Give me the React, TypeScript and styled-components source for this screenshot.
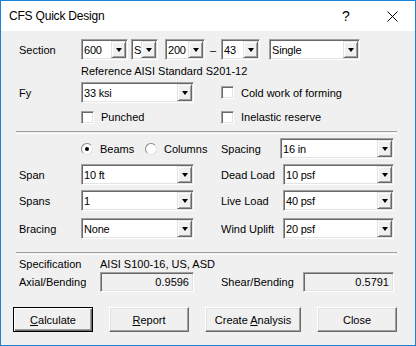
import React from "react";
import styled, { createGlobalStyle } from "styled-components";

const GlobalStyle = createGlobalStyle`
  html, body {
    margin: 0;
    padding: 0;
    background: #ffffff;
  }
  body {
    font-family: "Liberation Sans", Arial, sans-serif;
    font-size: 11px;
    color: #000000;
  }
`;

const Window = styled.div`
  width: 416px;
  height: 346px;
  box-sizing: border-box;
  border: 1px solid #1883d7;
  display: flex;
  flex-direction: column;
  background: #f0f0f0;
  overflow: hidden;
`;

const TitleBar = styled.div`
  height: 30px;
  flex-shrink: 0;
  background: #ffffff;
  display: flex;
  align-items: center;
  padding-left: 8px;
`;

const Title = styled.div`
  flex: 1;
  font-size: 12px;
  color: #000;
  letter-spacing: -0.2px;
`;

const TitleButton = styled.div`
  width: 46px;
  height: 30px;
  display: flex;
  align-items: center;
  justify-content: center;
  font-size: 14px;
`;

const Body = styled.div`
  flex: 1;
  padding: 8px 0 0 18px;
  display: flex;
  flex-direction: column;
`;

const Row = styled.div<{ $h: number; $mt?: number }>`
  display: flex;
  align-items: center;
  height: ${(p) => p.$h}px;
  margin-top: ${(p) => p.$mt ?? 0}px;
`;

const Label = styled.div<{ $w: number }>`
  width: ${(p) => p.$w}px;
  flex-shrink: 0;
  white-space: nowrap;
`;

const Spacer = styled.div<{ $w: number }>`
  width: ${(p) => p.$w}px;
  flex-shrink: 0;
`;

const Combo = styled.div<{ $w: number; $ml?: number }>`
  width: ${(p) => p.$w}px;
  height: 21px;
  margin-left: ${(p) => p.$ml ?? 0}px;
  box-sizing: border-box;
  flex-shrink: 0;
  display: flex;
  align-items: center;
  background: #ffffff;
  border: 1px solid;
  border-color: #a0a0a0 #ffffff #ffffff #a0a0a0;
  box-shadow: inset 1px 1px 0 #696969, inset -1px -1px 0 #e3e3e3;
  padding: 2px 1px 2px 2px;
`;

const ComboText = styled.div`
  flex: 1;
  min-width: 0;
  white-space: nowrap;
  letter-spacing: -0.2px;
`;

const ArrowButton = styled.div`
  width: 15px;
  height: 17px;
  box-sizing: border-box;
  flex-shrink: 0;
  display: flex;
  align-items: center;
  justify-content: center;
  background: #f0f0f0;
  border: 1px solid;
  border-color: #e3e3e3 #696969 #696969 #e3e3e3;
  box-shadow: inset 1px 1px 0 #ffffff, inset -1px -1px 0 #a0a0a0;
`;

const Arrow = styled.div`
  width: 0;
  height: 0;
  border-left: 3.5px solid transparent;
  border-right: 3.5px solid transparent;
  border-top: 4px solid #000;
`;

const Dash = styled.div`
  width: 16px;
  text-align: center;
`;

const Check = styled.div<{ $w?: number }>`
  display: flex;
  align-items: center;
  width: ${(p) => (p.$w ? `${p.$w}px` : "auto")};
  flex-shrink: 0;
`;

const Box = styled.div`
  width: 13px;
  height: 13px;
  box-sizing: border-box;
  background: #ffffff;
  border: 1px solid;
  border-color: #a0a0a0 #ffffff #ffffff #a0a0a0;
  box-shadow: inset 1px 1px 0 #696969, inset -1px -1px 0 #e3e3e3;
  margin-right: 7px;
`;

const Radio = styled.div<{ $on?: boolean }>`
  width: 12px;
  height: 12px;
  box-sizing: border-box;
  border-radius: 50%;
  background: #ffffff;
  border: 1px solid #8a8a8a;
  border-right-color: #e3e3e3;
  border-bottom-color: #e3e3e3;
  margin-right: 7px;
  display: flex;
  align-items: center;
  justify-content: center;
  &::after {
    content: "";
    width: 4px;
    height: 4px;
    border-radius: 50%;
    background: ${(p) => (p.$on ? "#000" : "transparent")};
  }
`;

const Separator = styled.div<{ $mt: number }>`
  margin: ${(p) => p.$mt}px 0 0 -3px;
  width: 381px;
  height: 1px;
  border-top: 1px solid #a0a0a0;
  border-bottom: 1px solid #ffffff;
`;

const Field = styled.div<{ $w: number }>`
  width: ${(p) => p.$w}px;
  height: 20px;
  box-sizing: border-box;
  flex-shrink: 0;
  background: #f0f0f0;
  border: 1px solid;
  border-color: #a0a0a0 #ffffff #ffffff #a0a0a0;
  box-shadow: inset 1px 1px 0 #696969, inset -1px -1px 0 #e3e3e3;
  display: flex;
  align-items: center;
  justify-content: flex-end;
  padding-right: 4px;
`;

const ButtonRow = styled.div`
  display: flex;
  gap: 16px;
  margin: 15px 0 0 -6px;
`;

const Button = styled.div<{ $w: number; $default?: boolean }>`
  width: ${(p) => p.$w}px;
  height: 25px;
  box-sizing: border-box;
  display: flex;
  align-items: center;
  justify-content: center;
  background: #f0f0f0;
  border: 1px solid;
  border-color: ${(p) =>
    p.$default ? "#000000" : "#ffffff #696969 #696969 #ffffff"};
  box-shadow: ${(p) =>
    p.$default
      ? "inset 1px 1px 0 #ffffff, inset -1px -1px 0 #696969, inset -2px -2px 0 #a0a0a0"
      : "inset -1px -1px 0 #a0a0a0, inset 1px 1px 0 #e3e3e3"};
  u {
    text-decoration: underline;
  }
`;

function Dropdown({ w, text, ml }: { w: number; text: string; ml?: number }) {
  return (
    <Combo $w={w} $ml={ml}>
      <ComboText>{text}</ComboText>
      <ArrowButton>
        <Arrow />
      </ArrowButton>
    </Combo>
  );
}

export default function App() {
  return (
    <>
      <GlobalStyle />
      <Window>
        <TitleBar>
          <Title>CFS Quick Design</Title>
          <TitleButton>?</TitleButton>
          <TitleButton>
            <svg width="11" height="11" viewBox="0 0 11 11">
              <path d="M0.5 0.5 L10.5 10.5 M10.5 0.5 L0.5 10.5" stroke="#000" strokeWidth="1" />
            </svg>
          </TitleButton>
        </TitleBar>
        <Body>
          <Row $h={21}>
            <Label $w={62}>Section</Label>
            <Dropdown w={47} text="600" />
            <Dropdown w={27} text="S" ml={3} />
            <Dropdown w={40} text="200" ml={7} />
            <Dash>–</Dash>
            <Dropdown w={39} text="43" />
            <Dropdown w={91} text="Single" ml={9} />
          </Row>
          <Row $h={20} $mt={1}>
            <Spacer $w={62} />
            Reference AISI Standard S201-12
          </Row>
          <Row $h={21} $mt={1}>
            <Label $w={62}>Fy</Label>
            <Dropdown w={113} text="33 ksi" />
            <Spacer $w={27} />
            <Check>
              <Box />
              Cold work of forming
            </Check>
          </Row>
          <Row $h={20} $mt={4}>
            <Spacer $w={62} />
            <Check $w={140}>
              <Box />
              Punched
            </Check>
            <Check>
              <Box />
              Inelastic reserve
            </Check>
          </Row>
          <Separator $mt={4} />
          <Row $h={21} $mt={4}>
            <Spacer $w={62} />
            <Check $w={64}>
              <Radio $on />
              Beams
            </Check>
            <Check $w={76}>
              <Radio />
              Columns
            </Check>
            <Label $w={59}>Spacing</Label>
            <Dropdown w={114} text="16 in" />
          </Row>
          <Row $h={21} $mt={5}>
            <Label $w={62}>Span</Label>
            <Dropdown w={113} text="10 ft" />
            <Spacer $w={27} />
            <Label $w={62}>Dead Load</Label>
            <Dropdown w={111} text="10 psf" />
          </Row>
          <Row $h={21} $mt={5}>
            <Label $w={62}>Spans</Label>
            <Dropdown w={113} text="1" />
            <Spacer $w={27} />
            <Label $w={62}>Live Load</Label>
            <Dropdown w={111} text="40 psf" />
          </Row>
          <Row $h={21} $mt={7}>
            <Label $w={62}>Bracing</Label>
            <Dropdown w={113} text="None" />
            <Spacer $w={27} />
            <Label $w={62}>Wind Uplift</Label>
            <Dropdown w={111} text="20 psf" />
          </Row>
          <Separator $mt={13} />
          <Row $h={17}>
            <Label $w={81}>Specification</Label>
            AISI S100-16, US, ASD
          </Row>
          <Row $h={20}>
            <Label $w={81}>Axial/Bending</Label>
            <Field $w={94}>0.9596</Field>
            <Spacer $w={27} />
            <Label $w={82}>Shear/Bending</Label>
            <Field $w={91}>0.5791</Field>
          </Row>
          <ButtonRow>
            <Button $w={80} $default>
              <span>
                <u>C</u>alculate
              </span>
            </Button>
            <Button $w={80}>
              <span>
                <u>R</u>eport
              </span>
            </Button>
            <Button $w={96}>
              <span>
                Create <u>A</u>nalysis
              </span>
            </Button>
            <Button $w={80}>Close</Button>
          </ButtonRow>
        </Body>
      </Window>
    </>
  );
}
